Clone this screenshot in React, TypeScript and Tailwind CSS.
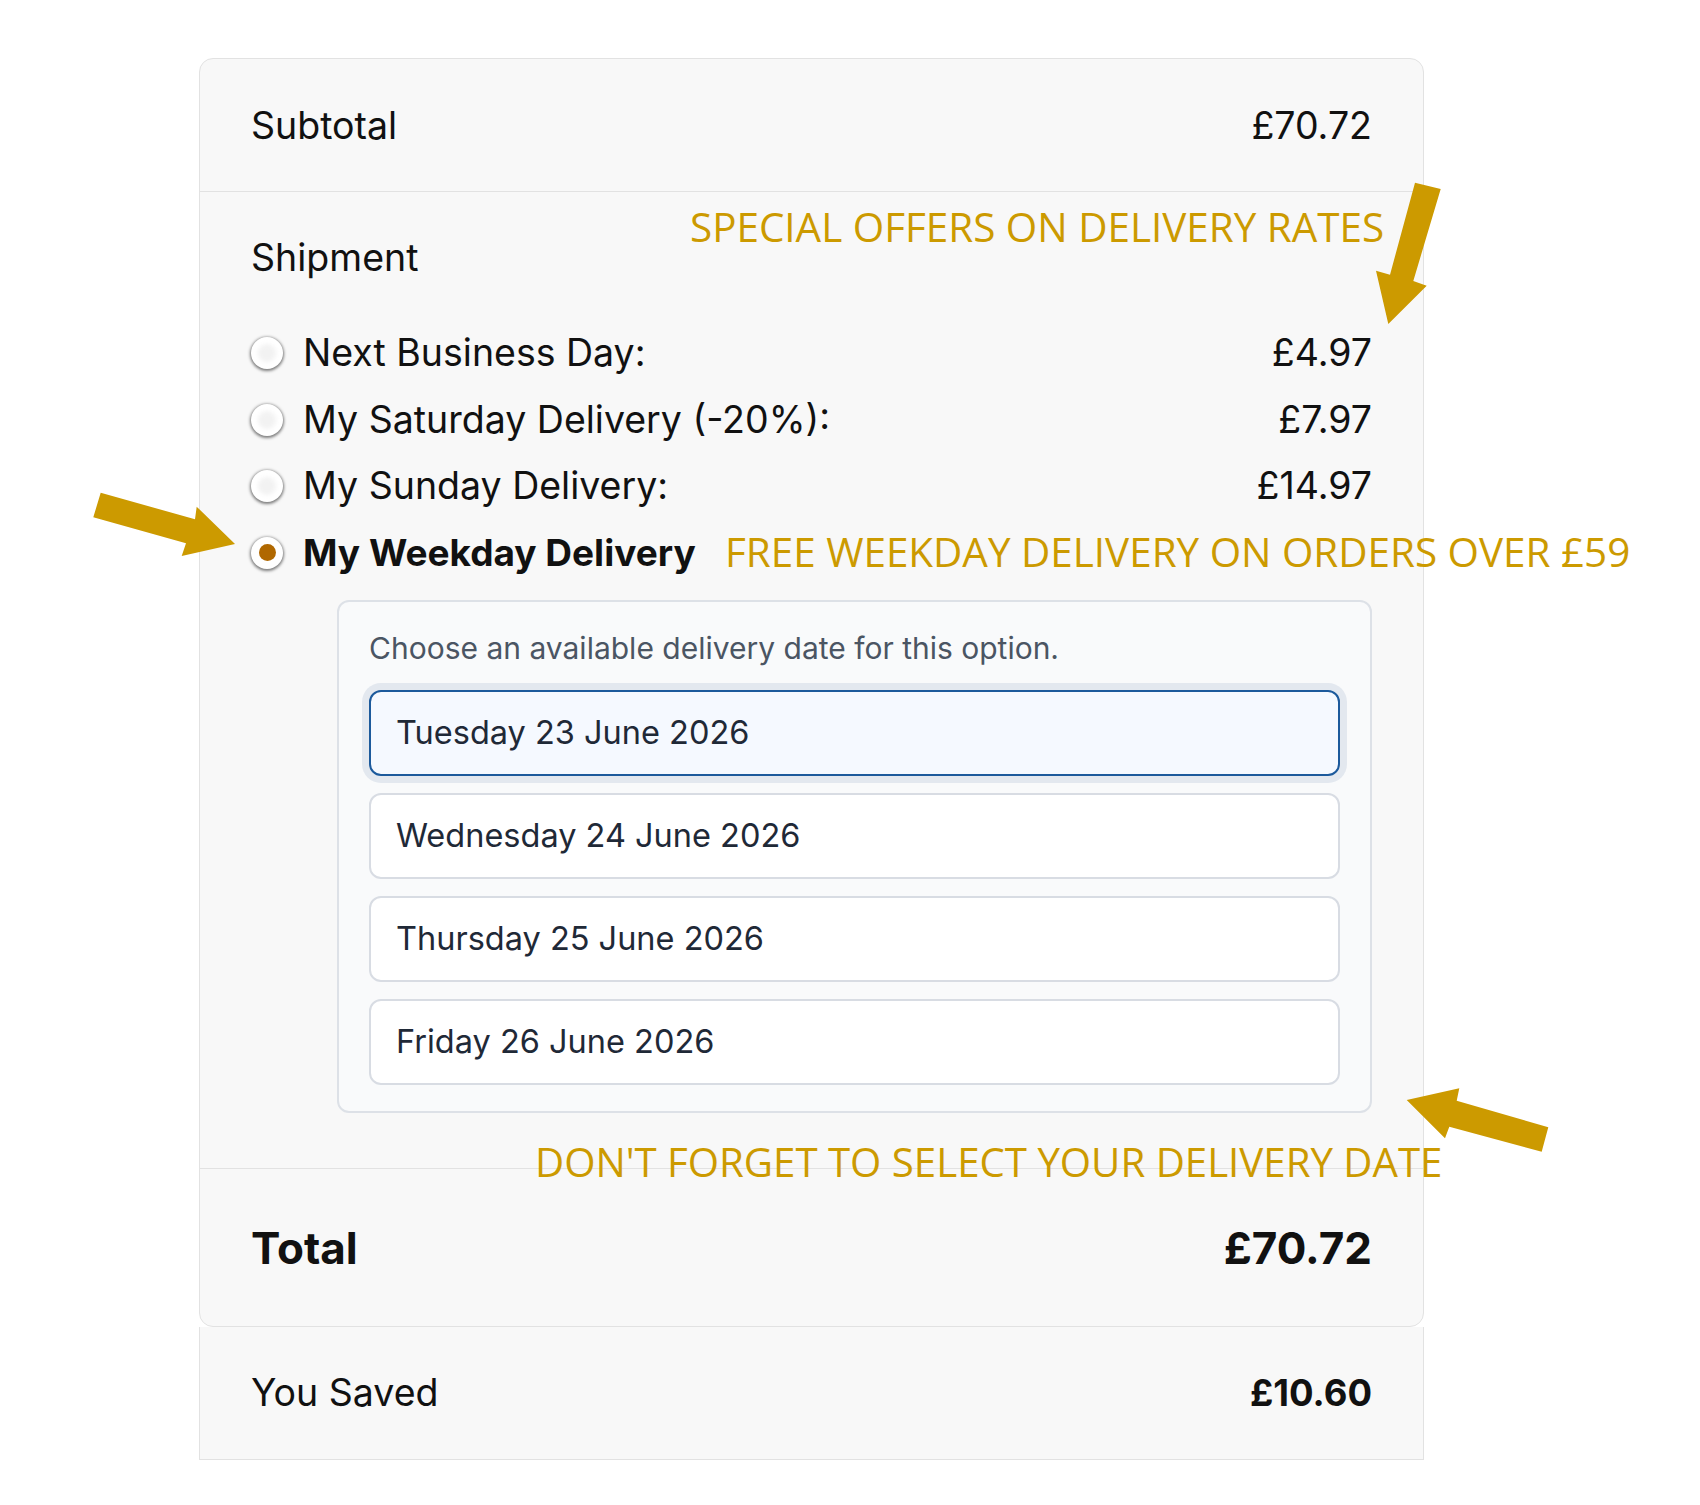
import React from 'react';

const options = [
  { label: 'Next Business Day:', price: '£4.97' },
  { label: 'My Saturday Delivery (-20%):', price: '£7.97' },
  { label: 'My Sunday Delivery:', price: '£14.97' },
  { label: 'My Weekday Delivery', price: '', checked: true },
];

const dates = ['Tuesday 23 June 2026', 'Wednesday 24 June 2026', 'Thursday 25 June 2026', 'Friday 26 June 2026'];

function Radio({ checked }: { checked?: boolean }) {
  return (
    <span className="w-8 h-8 shrink-0 rounded-full bg-white flex items-center justify-center shadow-[0_1px_3px_1px_rgba(0,0,0,0.5)]">
      {checked ? (
        <span className="w-[17px] h-[17px] rounded-full bg-[#b06800]" />
      ) : (
        <span className="w-[18px] h-[18px] rounded-full bg-[#f2f2f2] blur-[2px]" />
      )}
    </span>
  );
}

// callout arrows drawn over the card
function Arrows() {
  return (
    <svg className="absolute inset-0 pointer-events-none" width="1700" height="1505" viewBox="0 0 1700 1505">
      <g fill="#cc9a00">
        <polygon points="1415,182.7 1440.7,189 1413.3,281 1426.7,285.7 1388.3,324 1376,270.7 1390,274.7" />
        <polygon points="100.7,492.7 195,519.3 196.7,506.7 235,544 181.7,556 186,543.3 93.3,517.3" />
        <polygon points="1406.7,1100 1459.3,1088.3 1456.7,1100.7 1548.3,1127.3 1541.7,1151.7 1449.3,1126.7 1445,1138.3" />
      </g>
    </svg>
  );
}

export default function App() {
  return (
    <div className="relative w-[1700px] h-[1505px] bg-white font-['Inter',sans-serif] text-[#111111]">
      <div className="ml-[199px] pt-[58px] w-[1225px]">
        <div className="rounded-[14px] border border-[#e2e2e2] bg-[#f8f8f8]">
          <div className="h-[133px] px-[51px] pt-[2px] flex items-center justify-between border-b border-[#e2e2e2] text-[37.5px]">
            <span>Subtotal</span>
            <span>£70.72</span>
          </div>

          <div className="px-[51px] pt-[39px] pb-[55px] border-b border-[#e2e2e2]">
            <div className="text-[37.5px] leading-[54px]">Shipment</div>
            <div className="mt-[35px]">
              {options.map((o) => (
                <div key={o.label} className="h-[66.5px] flex items-center justify-between text-[37.5px]">
                  <div className="flex items-center gap-[20px]">
                    <Radio checked={o.checked} />
                    <span className={o.checked ? 'font-bold text-[37px]' : ''}>{o.label}</span>
                  </div>
                  <span>{o.price}</span>
                </div>
              ))}
            </div>

            <div className="ml-[86px] mt-[14px] rounded-[12px] border-2 border-[#dde1e7] bg-[#f9fafb] px-[30px] pt-[24px] pb-[26px]">
              <p className="text-[30px] leading-[45px] text-[#4b5563]">Choose an available delivery date for this option.</p>
              <div className="mt-[19px] flex flex-col gap-[17px]">
                {dates.map((d, i) => (
                  <div
                    key={d}
                    className={
                      i === 0
                        ? 'h-[86px] px-[25px] flex items-center rounded-[12px] border-2 border-[#1c5a9c] bg-[#f5f9ff] ring-[7px] ring-[#e3e8ef] text-[32.5px] text-[#1f2937]'
                        : 'h-[86px] px-[25px] flex items-center rounded-[12px] border-2 border-[#d8dce3] bg-white text-[32.5px] text-[#1f2937]'
                    }
                  >
                    {d}
                  </div>
                ))}
              </div>
            </div>
          </div>

          <div className="h-[157px] px-[51px] flex items-center justify-between text-[44px] font-bold">
            <span>Total</span>
            <span>£70.72</span>
          </div>
        </div>

        <div className="h-[133px] px-[51px] flex items-center justify-between border-x border-b border-[#e2e2e2] bg-[#f8f8f8] text-[37.5px]">
          <span>You Saved</span>
          <span className="font-bold text-[36.5px]">£10.60</span>
        </div>
      </div>

      <div className="absolute left-[690px] top-[207px] whitespace-nowrap font-['Open_Sans',sans-serif] text-[40.4px] leading-[40px] text-[#cc9a00]">
        SPECIAL OFFERS ON DELIVERY RATES
      </div>
      <div className="absolute left-[725px] top-[532px] whitespace-nowrap font-['Open_Sans',sans-serif] text-[40.4px] leading-[40px] text-[#cc9a00]">
        FREE WEEKDAY DELIVERY ON ORDERS OVER £59
      </div>
      <div className="absolute left-[535px] top-[1142px] whitespace-nowrap font-['Open_Sans',sans-serif] text-[40.2px] leading-[40px] text-[#cc9a00]">
        DON'T FORGET TO SELECT YOUR DELIVERY DATE
      </div>

      <Arrows />
    </div>
  );
}
